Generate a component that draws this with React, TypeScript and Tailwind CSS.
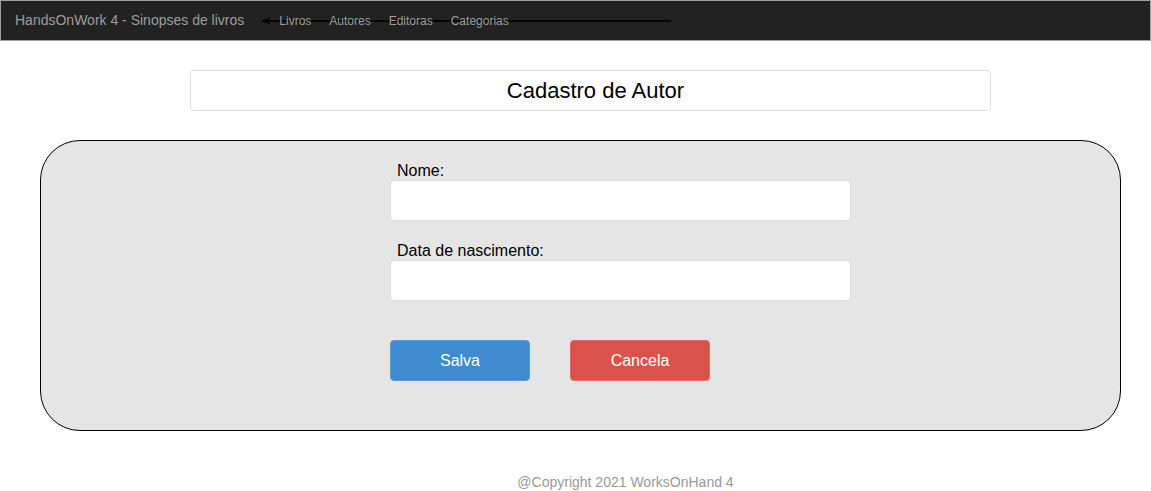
const links = ["Livros", "Autores", "Editoras", "Categorias"];

const App = () => {
  return (
    <div className="min-h-[491px] bg-white font-['Liberation_Sans',Arial,sans-serif]">
      <nav className="h-[41px] flex items-center bg-[#222222] border border-[#a0a0a0]">
        <span className="ml-[14px] text-[14px] text-[#9d9d9d]">
          HandsOnWork 4 - Sinopses de livros
        </span>
        <div className="relative ml-[35px] flex items-center">
          <svg
            className="absolute left-[-18px] top-1/2 -translate-y-1/2"
            width="410"
            height="8"
            viewBox="0 0 410 8"
          >
            <line x1="2" y1="4" x2="410" y2="4" stroke="#000" strokeWidth="1.4" />
            <path d="M0 4 L9 0.5 L7 4 L9 7.5 Z" fill="#000" />
          </svg>
          {links.map((link) => (
            <a
              key={link}
              className="relative mr-[18px] text-[12px] text-[#9d9d9d] last:mr-0"
            >
              {link}
            </a>
          ))}
        </div>
      </nav>

      <div className="mt-[29px] ml-[190px] w-[801px] h-[41px] flex items-center justify-center border border-[#dddddd] rounded-[4px] text-[22px] text-black pl-[10px]">
        Cadastro de Autor
      </div>

      <div className="mt-[29px] ml-[40px] w-[1081px] h-[291px] rounded-[40px] border border-black bg-[#e5e5e5] flex">
        <form className="w-[461px] ml-[349px] pt-[21px] flex flex-col">
          <label className="pl-[7px] text-[16px] leading-[18px] text-black">Nome:</label>
          <input className="h-[41px] rounded-[4px] bg-white border border-[#dddddd] outline-none" />
          <label className="mt-[21px] pl-[7px] text-[16px] leading-[18px] text-black">
            Data de nascimento:
          </label>
          <input className="h-[41px] rounded-[4px] bg-white border border-[#dddddd] outline-none" />
          <div className="mt-[39px] flex gap-[40px]">
            <button
              type="button"
              className="w-[140px] h-[41px] rounded-[4px] bg-[#3e8bd0] border border-[#5a9bd5] text-white text-[16px]"
            >
              Salva
            </button>
            <button
              type="button"
              className="w-[140px] h-[41px] rounded-[4px] bg-[#db524d] border border-[#e06a65] text-white text-[16px]"
            >
              Cancela
            </button>
          </div>
        </form>
      </div>

      <footer className="mt-[41px] pl-[100px] text-center text-[14px] text-[#999999]">
        @Copyright 2021 WorksOnHand 4
      </footer>
    </div>
  );
};

export default App;
